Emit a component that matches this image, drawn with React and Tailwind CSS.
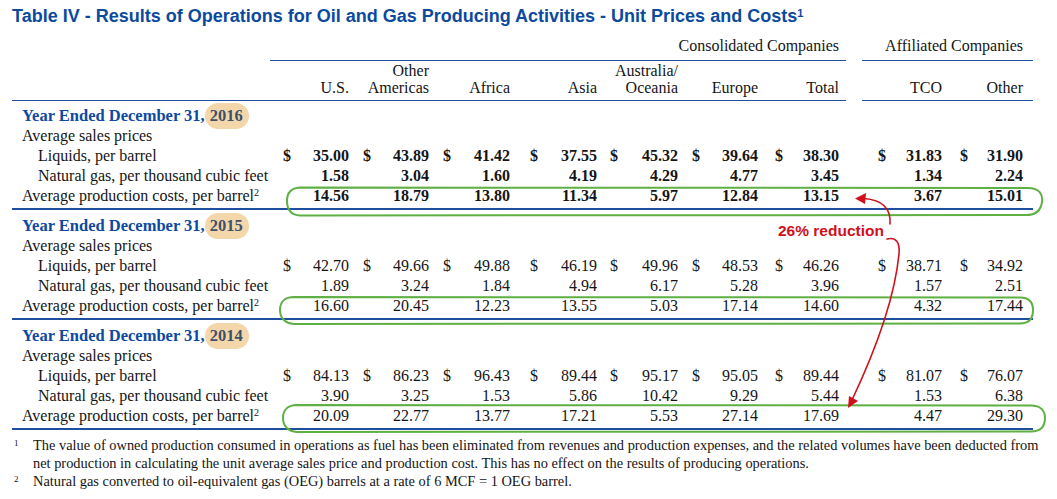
/**
 * Table IV: unit prices and costs for oil and gas producing activities,
 * with hand-drawn annotation overlay (green loops, red arrows).
 */
import React from 'react'

const COLS = [
  { key: 'us', label: ['', 'U.S.'], cell: 'w-[86px] pl-[13px] pr-[7px]' },
  { key: 'oa', label: ['Other', 'Americas'], cell: 'w-[80px] pl-[7px] pr-[7px]' },
  { key: 'af', label: ['', 'Africa'], cell: 'w-[81px] pl-[7px] pr-[7px]' },
  { key: 'asia', label: ['', 'Asia'], cell: 'w-[87px] pl-[13px] pr-[7px]' },
  { key: 'aus', label: ['Australia/', 'Oceania'], cell: 'w-[81px] pl-[6px] pr-[7px]' },
  { key: 'eur', label: ['', 'Europe'], cell: 'w-[80px] pl-[7px] pr-[7px]' },
  { key: 'tot', label: ['', 'Total'], cell: 'w-[81px] pl-[10px] pr-[7px]' },
]

const AFF = [
  { key: 'tco', label: ['', 'TCO'], cell: 'w-[87px] pl-[16px] pr-[7px]' },
  { key: 'oth', label: ['', 'Other'], cell: 'w-[84px] pl-[11px] pr-[10px]' },
]

const SECTIONS = [
  {
    year: '2016',
    bold: true,
    pt: 'pt-[4px]',
    liquids: ['35.00', '43.89', '41.42', '37.55', '45.32', '39.64', '38.30', '31.83', '31.90'],
    gas: ['1.58', '3.04', '1.60', '4.19', '4.29', '4.77', '3.45', '1.34', '2.24'],
    cost: ['14.56', '18.79', '13.80', '11.34', '5.97', '12.84', '13.15', '3.67', '15.01'],
  },
  {
    year: '2015',
    bold: false,
    pt: 'pt-[5px]',
    liquids: ['42.70', '49.66', '49.88', '46.19', '49.96', '48.53', '46.26', '38.71', '34.92'],
    gas: ['1.89', '3.24', '1.84', '4.94', '6.17', '5.28', '3.96', '1.57', '2.51'],
    cost: ['16.60', '20.45', '12.23', '13.55', '5.03', '17.14', '14.60', '4.32', '17.44'],
  },
  {
    year: '2014',
    bold: false,
    pt: 'pt-[5px]',
    liquids: ['84.13', '86.23', '96.43', '89.44', '95.17', '95.05', '89.44', '81.07', '76.07'],
    gas: ['3.90', '3.25', '1.53', '5.86', '10.42', '9.29', '5.44', '1.53', '6.38'],
    cost: ['20.09', '22.77', '13.77', '17.21', '5.53', '27.14', '17.69', '4.47', '29.30'],
  },
]

const ALL = [...COLS, null, ...AFF]

const ValueRow = ({ label, values, dollar, bold, indent }) => {
  let i = 0
  return (
    <div className="flex h-[20px] items-center leading-[20px]">
      <div className={`w-[258px] whitespace-nowrap ${indent ? 'pl-[26px]' : 'pl-[10px]'}`}>{label}</div>
      {ALL.map((c, idx) => {
        if (!c) return <div key={`sp-${idx}`} className="w-[16px]" />
        const v = values[i++]
        return (
          <div key={c.key} className={`${c.cell} flex justify-between ${bold ? 'font-bold' : ''}`}>
            <span>{dollar ? '$' : ''}</span>
            <span>{v}</span>
          </div>
        )
      })}
    </div>
  )
}

const Section = ({ s }) => (
  <div className={`${s.pt} border-b-2 border-[#1d4f9e] pb-[2px]`}>
    <div className="flex h-[21px] items-center whitespace-nowrap pl-[10px] text-[16.5px] font-bold leading-[20px] text-[#0d4aa0]">
      Year Ended December 31,
      <span className="rounded-full bg-[#f3d6aa] py-[3px] pl-[5px] pr-[6px] text-[#3f5069]">{s.year}</span>
    </div>
    <div className="flex h-[20px] items-center pl-[10px] leading-[20px]">Average sales prices</div>
    <ValueRow label="Liquids, per barrel" values={s.liquids} dollar bold={s.bold} indent />
    <ValueRow label="Natural gas, per thousand cubic feet" values={s.gas} bold={s.bold} indent />
    <ValueRow
      label={
        <>
          Average production costs, per barrel<sup className="text-[10px]">2</sup>
        </>
      }
      values={s.cost}
      bold={s.bold}
    />
  </div>
)

const Annotations = () => (
  <svg
    className="pointer-events-none absolute left-0 top-0"
    width="1057"
    height="499"
    viewBox="0 0 1057 499"
    fill="none"
  >
    <g stroke="#5eb043" strokeWidth="2" strokeLinecap="round">
      <path d="M300 187.5 L1028 188 C1040 188 1043 195 1042 202 C1041 210 1036 215 1026 215 L300 215.5 C291 215 287 210 287 201 C287 193 291 188 300 187.5 Z" />
      <path d="M294 297 L1020 297.5 C1030 297.5 1033 303 1033 310 C1033 318 1029 323.5 1020 323.5 L294 324 C285 323.5 280 318 280 310 C280 302 285 297 294 297 Z" />
      <path d="M297 405 L1031 405.5 C1041 405.5 1045 411 1045 418 C1045 426 1041 431.5 1031 431.5 L297 432 C288 431.5 283 426 283 418 C283 410 288 405 297 405 Z" />
    </g>
    <g stroke="#d0101c" strokeWidth="1.6" strokeLinecap="round">
      <path d="M890 224 C891 210 884 200 864 198.5" />
      <path d="M887 239 C896 237 900 242 899 254 C895 295 878 345 852 400" />
    </g>
    <g fill="#d0101c">
      <path d="M855 198.5 L866 193 L865 204 Z" />
      <path d="M848 408 L849 396 L858 401 Z" />
    </g>
  </svg>
)

export default function App() {
  return (
    <div className="relative h-[499px] w-[1057px] overflow-hidden bg-white pl-[12px] font-['Liberation_Serif',serif] text-[16px] text-[#151515]">
      <div className="h-[27px] whitespace-nowrap pt-[6px] font-['Liberation_Sans',Arial,sans-serif] text-[18px] font-bold leading-[21px] text-[#0b4a9e]">
        Table IV - Results of Operations for Oil and Gas Producing Activities - Unit Prices and Costs
        <sup className="text-[11px]">1</sup>
      </div>

      {/* group header */}
      <div className="flex h-[34px] items-end">
        <div className="w-[258px]" />
        <div className="w-[576px] border-b border-[#1d4f9e] pb-[4px] pr-[7px] text-right leading-[20px]">
          Consolidated Companies
        </div>
        <div className="w-[16px]" />
        <div className="w-[171px] border-b border-[#1d4f9e] pb-[4px] pr-[10px] text-right leading-[20px]">
          Affiliated Companies
        </div>
      </div>

      {/* column header */}
      <div className="flex h-[40px]">
        <div className="w-[258px] border-b border-[#1d4f9e]" />
        {ALL.map((c, idx) =>
          c ? (
            <div
              key={c.key}
              className={`${c.cell} flex flex-col justify-end border-b border-[#1d4f9e] pb-[4px] text-right leading-[17px]`}
            >
              {c.label[0] && <div>{c.label[0]}</div>}
              <div>{c.label[1]}</div>
            </div>
          ) : (
            <div key={`sp-${idx}`} className="w-[16px]" />
          ),
        )}
      </div>

      <div className="w-[1021px]">
        {SECTIONS.map((s) => (
          <Section key={s.year} s={s} />
        ))}
      </div>

      {/* footnotes */}
      <div className="pt-[6px] text-[14.4px] leading-[18px]">
        <div className="flex">
          <span className="w-[21px] pl-[2px] text-[9px] leading-[14px]">1</span>
          <div>
            <div className="whitespace-nowrap">
              The value of owned production consumed in operations as fuel has been eliminated from revenues and production expenses, and the related volumes have been deducted from
            </div>
            <div className="whitespace-nowrap">
              net production in calculating the unit average sales price and production cost. This has no effect on the results of producing operations.
            </div>
          </div>
        </div>
        <div className="flex">
          <span className="w-[21px] pl-[2px] text-[9px] leading-[14px]">2</span>
          <div className="whitespace-nowrap">
            Natural gas converted to oil-equivalent gas (OEG) barrels at a rate of 6 MCF = 1 OEG barrel.
          </div>
        </div>
      </div>

      <div className="absolute left-[778px] top-[222px] font-['Liberation_Sans',Arial,sans-serif] text-[15.5px] font-bold leading-[18px] text-[#d0101c]">
        26% reduction
      </div>

      <Annotations />
    </div>
  )
}
